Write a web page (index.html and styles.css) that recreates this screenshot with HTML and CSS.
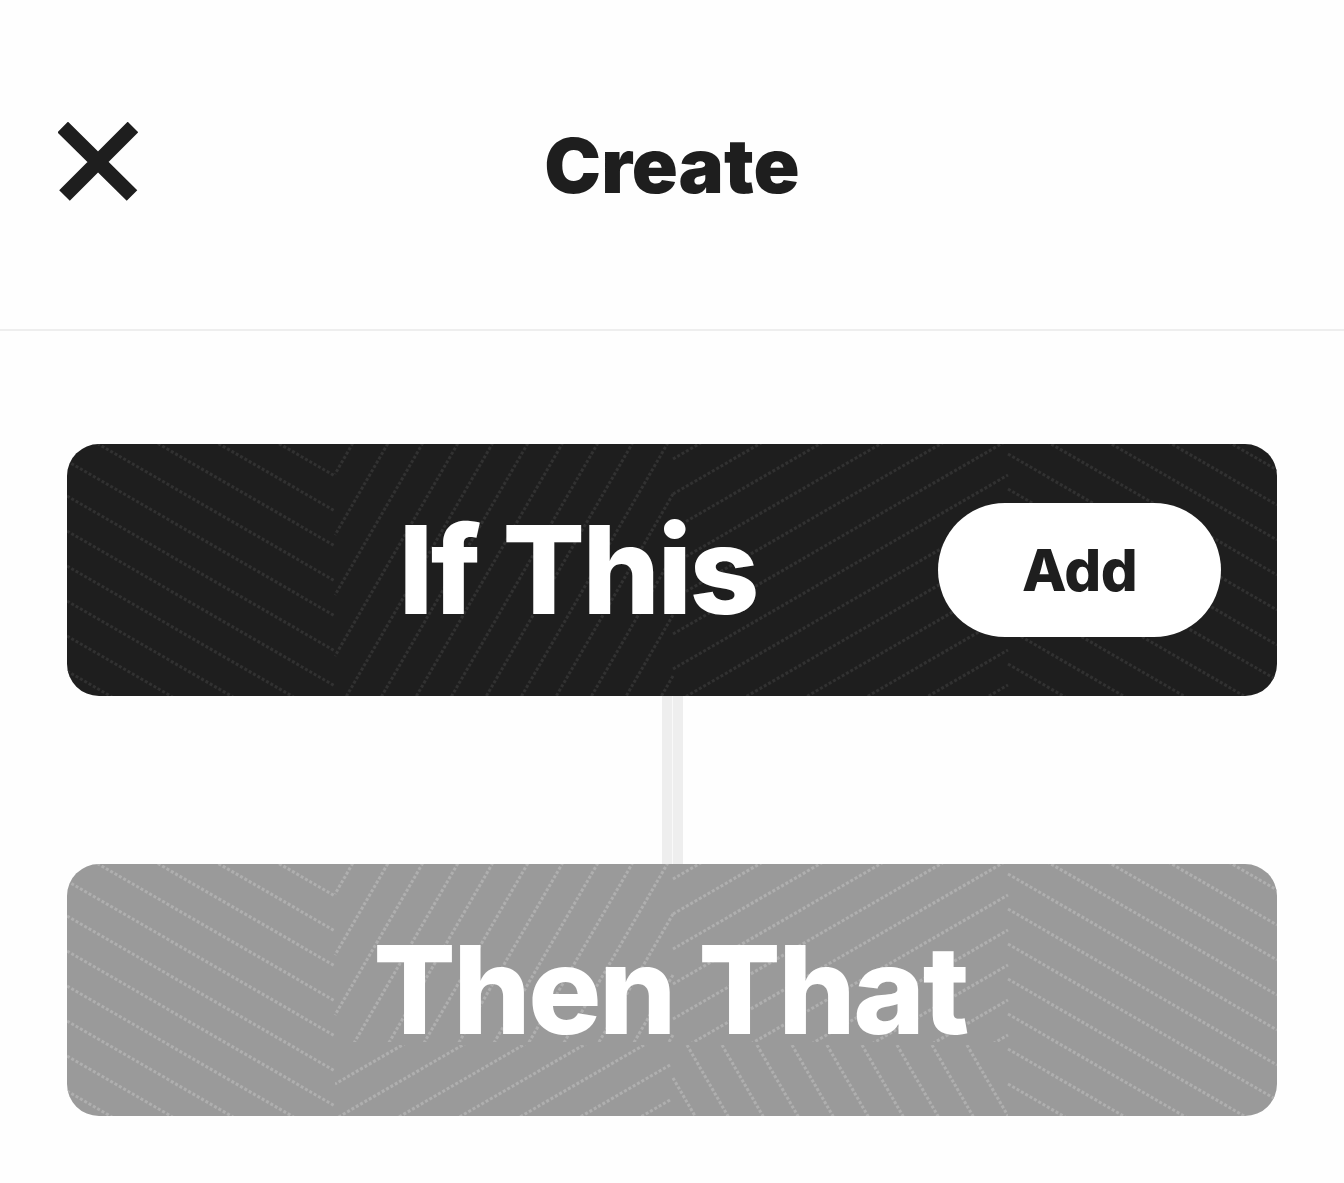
FILE: index.html
```html
<!DOCTYPE html>
<html lang="en">

<head>
  <meta charset="UTF-8" />
  <meta name="viewport" content="width=device-width, initial-scale=1.0" />
  <title>Create</title>
  <link rel="stylesheet" href="styles.css">
</head>

<body>
  <!-- shared card texture -->
  <svg class="defs" width="0" height="0" aria-hidden="true">
    <defs>
      <path id="sides" d="M0 -123L268 32M0 -88L268 67M0 -53L268 102M0 -18L268 137M0 17L268 172M0 52L268 207M0 87L268 242M0 122L268 277M0 157L268 312M0 192L268 347M0 227L268 382
        M941 -165L1210 -9M941 -130L1210 26M941 -95L1210 61M941 -60L1210 96M941 -25L1210 131M941 10L1210 166M941 45L1210 201M941 80L1210 236M941 115L1210 271M941 150L1210 306M941 185L1210 341M941 220L1210 376" />
      <path id="steep" d="M606 -555L268 30M606 -494L268 91M606 -434L268 151M606 -373L268 212M606 -313L268 272M606 -252L268 333M606 -192L268 393M606 -131L268 454M606 -71L268 514M606 -10L268 575M606 50L268 635M606 111L268 696M606 171L268 756M606 232L268 817" />
      <path id="rise" d="M606 15L941 -179M606 50L941 -144M606 85L941 -109M606 120L941 -74M606 155L941 -39M606 190L941 -4M606 225L941 31M606 260L941 66M606 295L941 101M606 330L941 136M606 365L941 171M606 400L941 206M606 435L941 241" />
      <path id="lower" d="M603 26L268 220M603 61L268 255M603 96L268 290M603 131L268 325M603 166L268 360M603 201L268 395M603 236L268 430M603 271L268 465
        M620 181L662 254M655 181L697 254M690 181L732 254M725 181L767 254M760 181L802 254M795 181L837 254M830 181L872 254M865 181L907 254M900 181L941 252M606 214L628 252" />
      <clipPath id="upper-part">
        <rect x="0" y="0" width="1210" height="178" />
      </clipPath>
      <clipPath id="lower-part">
        <rect x="268" y="181" width="673" height="71" />
      </clipPath>
    </defs>
  </svg>

  <header class="top-bar">
    <svg class="close-icon" viewBox="0 0 80 80" aria-label="Close">
      <path d="M4.7 5L74 73.5M75 5L6.5 73.5" />
    </svg>
    <h1>Create</h1>
  </header>

  <main class="flow">
    <section class="step step-active">
      <svg class="texture" viewBox="0 0 1210 252" aria-hidden="true">
        <use href="#sides" />
        <use href="#steep" />
        <use href="#rise" />
      </svg>
      <h2>If This</h2>
      <button class="add-btn" type="button">Add</button>
    </section>

    <div class="connector"></div>

    <section class="step step-next">
      <svg class="texture" viewBox="0 0 1210 252" aria-hidden="true">
        <use href="#sides" />
        <g clip-path="url(#upper-part)">
          <use href="#steep" />
          <use href="#rise" />
        </g>
        <g clip-path="url(#lower-part)">
          <use href="#lower" />
        </g>
      </svg>
      <h2>Then That</h2>
    </section>
  </main>
</body>

</html>
```

FILE: styles.css
```css
body {
  margin: 0;
  padding: 0;
  font-family: Inter, Lato, sans-serif;
  background-color: #fefefe;
  color: #1e1e1e;
}

.defs {
  position: absolute;
}

.top-bar {
  display: grid;
  grid-template-columns: 1fr auto 1fr;
  align-items: start;
  align-content: start;
  height: 207px;
  padding: 122px 58px 0;
  border-bottom: 2px solid #eeeeee;
}

.top-bar h1 {
  margin: 0;
  font-size: 76px;
  font-weight: 900;
  line-height: 86px;
}

.close-icon {
  width: 80px;
  height: 80px;
  fill: none;
  stroke: #1e1e1e;
  stroke-width: 15;
}

.flow {
  display: flex;
  flex-direction: column;
  align-items: center;
  padding: 113px 67px 67px;
}

.step {
  position: relative;
  display: flex;
  align-items: center;
  width: 100%;
  height: 252px;
  border-radius: 32px;
  overflow: hidden;
}

.step h2 {
  position: relative;
  margin: 0;
  font-size: 122px;
  font-weight: 800;
  letter-spacing: -2.5px;
  line-height: 1;
  color: white;
}

.step-active {
  justify-content: flex-end;
  gap: 181px;
  padding-right: 56px;
  box-sizing: border-box;
  background-color: #1e1e1e;
  color: #313131;
}

.step-next {
  justify-content: center;
  padding-right: 4px;
  box-sizing: border-box;
  background-color: #9a9a9a;
  color: #afafaf;
}

.texture {
  position: absolute;
  top: 0;
  left: 0;
  width: 100%;
  height: 100%;
  fill: none;
  stroke: currentColor;
  stroke-width: 3;
  stroke-dasharray: 3 2;
}

.add-btn {
  position: relative;
  width: 283px;
  height: 134px;
  border: none;
  border-radius: 67px;
  background-color: white;
  font-family: inherit;
  font-size: 58px;
  font-weight: 800;
  letter-spacing: -0.5px;
  color: #1e1e1e;
}

.connector {
  width: 21px;
  height: 168px;
  background: linear-gradient(to right, #eeeeee 10px, #f9f9f9 10px, #f9f9f9 11px, #eeeeee 11px);
}
```
